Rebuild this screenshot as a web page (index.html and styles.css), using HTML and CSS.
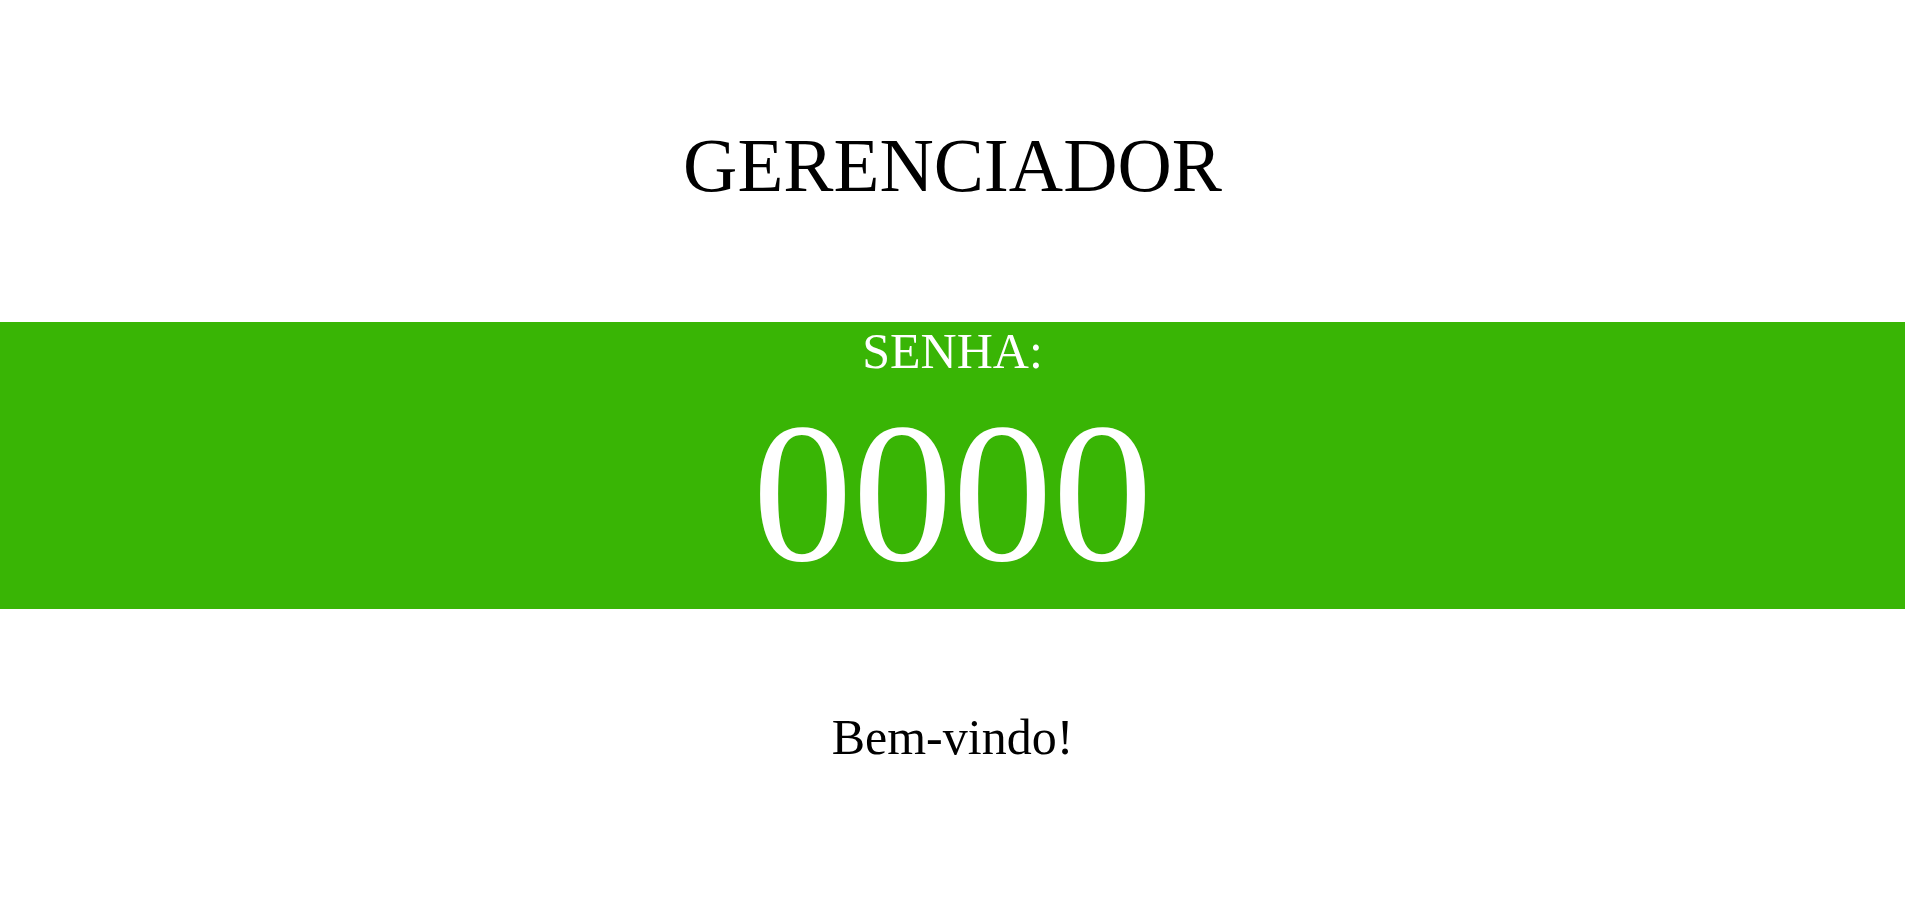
FILE: index.html
```html
<!DOCTYPE html>
<html lang="pt">
<head>
<meta charset="utf-8">
<title>Gerenciador</title>
<link rel="stylesheet" href="styles.css">
</head>
<body>
  <header class="header">
    <h1 class="title">GERENCIADOR</h1>
  </header>
  <section class="painel">
    <div class="rotulo">SENHA:</div>
    <div class="senha">0000</div>
  </section>
  <p class="mensagem">Bem-vindo!</p>
</body>
</html>
```
FILE: styles.css
```css
html, body {
  margin: 0;
  padding: 0;
  background: #ffffff;
}
body {
  font-family: "Liberation Serif", "Times New Roman", serif;
  text-align: center;
  color: #000;
}
.header {
  padding: 128px 0 118.8px;
}
.title {
  margin: 0;
  font-size: 75.2px;
  font-weight: normal;
  line-height: 1;
}
.painel {
  background: #39b505;
  color: #fff;
  padding: 4.3px 0 15.5px;
}
.rotulo {
  font-size: 50px;
  line-height: 1;
}
.senha {
  margin-top: 17.2px;
  font-size: 200px;
  line-height: 1;
}
.mensagem {
  margin: 103.3px 0 0;
  font-size: 50px;
  line-height: 1;
}
```
